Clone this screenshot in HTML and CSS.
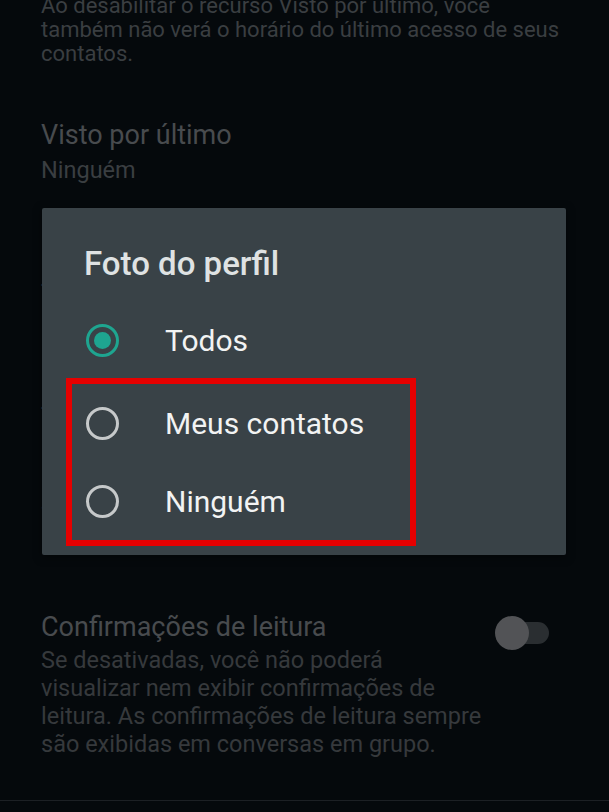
FILE: index.html
```html
<!DOCTYPE html>
<html lang="pt-BR">
<head>
    <meta charset="UTF-8">
    <meta name="viewport" content="width=device-width, initial-scale=1.0">
    <title>Privacidade</title>
    <link rel="stylesheet" href="styles.css">
</head>
<body>
    <div class="settings">
        <p class="note">Ao desabilitar o recurso Visto por último, você também não verá o horário do último acesso de seus contatos.</p>

        <div class="item">
            <div class="item-title">Visto por último</div>
            <div class="item-sub">Ninguém</div>
        </div>
        <div class="item">
            <div class="item-title">Foto do perfil</div>
            <div class="item-sub">Todos</div>
        </div>
        <div class="item">
            <div class="item-title">Recado</div>
            <div class="item-sub">Todos</div>
        </div>
        <div class="item">
            <div class="item-title">Status</div>
            <div class="item-sub">Meus contatos</div>
        </div>
        <div class="item item-toggle">
            <div class="item-text">
                <div class="item-title">Confirmações de leitura</div>
                <div class="item-desc">Se desativadas, você não poderá<br>visualizar nem exibir confirmações de<br>leitura. As confirmações de leitura sempre<br>são exibidas em conversas em grupo.</div>
            </div>
            <div class="switch"><span class="thumb"></span></div>
        </div>
        <div class="divider"></div>
    </div>

    <div class="dialog">
        <div class="dialog-title">Foto do perfil</div>
        <div class="option">
            <span class="radio checked"></span>
            <span class="option-label">Todos</span>
        </div>
        <div class="highlight">
            <div class="option">
                <span class="radio"></span>
                <span class="option-label">Meus contatos</span>
            </div>
            <div class="option">
                <span class="radio"></span>
                <span class="option-label">Ninguém</span>
            </div>
        </div>
    </div>
</body>
</html>
```

FILE: styles.css
```css
html{
    height: 100%;
    overflow: hidden;
}
body{
    margin: 0;
    height: 100%;
    overflow: hidden;
    background: #05090c;
    font-family: Roboto, "Noto Sans", "Liberation Sans", sans-serif;
    position: relative;
}
.settings{
    padding: 0 0 0 41px;
}
.note{
    margin: -6px 0 24px 0;
    width: 525px;
    font-size: 22px;
    line-height: 24px;
    color: #3a3e41;
}
.item{
    padding: 30px 0 29px;
    height: 64px;
}
.item-title{
    font-size: 27px;
    line-height: 30px;
    color: #484b4e;
}
.item-sub{
    margin-top: 6px;
    font-size: 23.5px;
    line-height: 28px;
    color: #3a3e41;
}
.item-toggle{
    height: auto;
    display: flex;
    align-items: flex-start;
    padding-bottom: 0;
}
.item-text{
    width: 450px;
}
.item-desc{
    margin-top: 4px;
    font-size: 23.5px;
    line-height: 28px;
    white-space: nowrap;
    color: #36393c;
}
.switch{
    margin: 10px 0 0 14px;
    width: 44px;
    height: 22px;
    border-radius: 11px;
    background: #2a2e31;
    position: relative;
}
.thumb{
    position: absolute;
    left: -10px;
    top: -6px;
    width: 34px;
    height: 34px;
    border-radius: 50%;
    background: #525356;
}
.divider{
    margin: 42px 0 0 -41px;
    height: 1px;
    background: #1c2024;
}
.dialog{
    position: absolute;
    top: 208px;
    left: 42px;
    width: 524px;
    height: 347px;
    box-sizing: border-box;
    padding: 38px 42px 0;
    background: #394247;
    border-radius: 2px;
    box-shadow: 0 2px 8px rgba(0,0,0,0.5);
}
.dialog-title{
    font-size: 33px;
    line-height: 36px;
    font-weight: 500;
    color: #dfe2e3;
    margin-bottom: 19px;
}
.option{
    height: 78px;
    padding-left: 2px;
    display: flex;
    align-items: center;
}
.radio{
    width: 33px;
    height: 33px;
    box-sizing: border-box;
    border: 3px solid #c6c9ca;
    border-radius: 50%;
    display: flex;
    align-items: center;
    justify-content: center;
    flex-shrink: 0;
}
.radio.checked{
    border-color: #1ea590;
}
.radio.checked::after{
    content: "";
    width: 17px;
    height: 17px;
    border-radius: 50%;
    background: #1ea590;
}
.option-label{
    margin-left: 46px;
    font-size: 30px;
    color: #f2f3f3;
}
.highlight{
    margin: -1px 0 0 -18px;
    padding-left: 12px;
    width: 350px;
    box-sizing: border-box;
    border: 6px solid #e60000;
}
```
